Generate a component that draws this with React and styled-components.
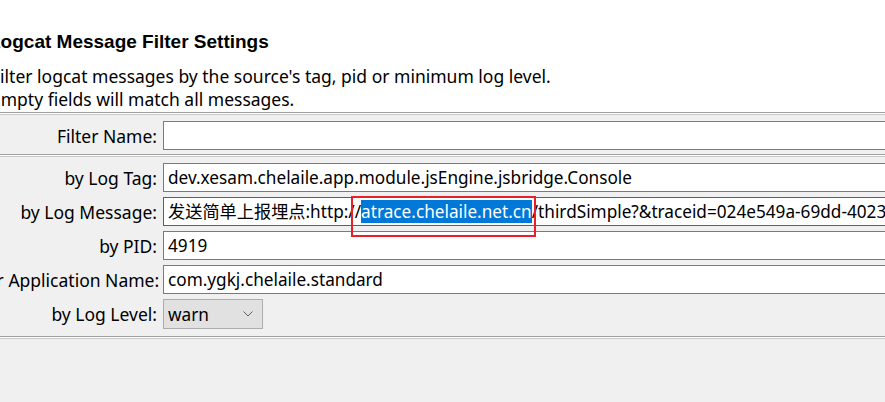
import React from 'react';
import styled, { createGlobalStyle } from 'styled-components';

const GlobalStyle = createGlobalStyle`
  html, body {
    margin: 0;
    padding: 0;
    background: #f0f0f0;
    overflow: hidden;
  }
  body {
    width: 885px;
    height: 402px;
    font-family: 'Noto Sans', 'Noto Sans CJK SC', sans-serif;
    color: #000;
  }
`;

const Page = styled.div`
  margin-left: -20px;
  width: 1000px;
  display: flex;
  flex-direction: column;
`;

const Header = styled.div`
  background: #fff;
  padding: 31px 0 1px 9px;
  display: flex;
  flex-direction: column;
  gap: 12px;
`;

const Title = styled.div`
  font-family: 'Liberation Sans', Arial, sans-serif;
  font-weight: bold;
  font-size: 19px;
  line-height: 22px;
`;

const Description = styled.div`
  font-size: 17.5px;
  line-height: 23px;
  margin-left: 2px;
`;

const Divider = styled.div`
  height: 1px;
  border-top: 1px solid #a0a0a0;
  border-bottom: 1px solid #c8c8c8;
  background: #fff;
`;

const Section = styled.div`
  display: grid;
  grid-template-columns: 177px 1fr;
  column-gap: 6px;
  row-gap: 5px;
  padding: ${p => p.$pad};
`;

const Label = styled.div`
  font-size: 17.5px;
  text-align: right;
  white-space: nowrap;
  align-self: center;
`;

const Field = styled.div`
  position: relative;
  height: 27px;
  width: 760px;
  border: 1px solid ${p => (p.$focused ? '#0078d7' : '#7a7a7a')};
  background: #fff;
  padding-left: 4px;
  font-size: 17.2px;
  line-height: 27px;
  white-space: nowrap;
`;

const Selected = styled.span`
  position: relative;
  background: #0078d7;
  color: #fff;
`;

const Annotation = styled.span`
  position: absolute;
  left: -10px;
  right: -4px;
  top: -4px;
  bottom: -14px;
  border: 2px solid #e8202a;
  z-index: 2;
  pointer-events: none;
`;

const Combo = styled.div`
  box-sizing: border-box;
  width: 100px;
  height: 30px;
  border: 1px solid #adadad;
  background: #e1e1e1;
  display: flex;
  align-items: center;
  justify-content: space-between;
  padding: 0 9px 0 4px;
  font-size: 17.2px;
`;

const Chevron = () => (
  <svg width="10" height="6" viewBox="0 0 10 6">
    <path d="M0.5 0.5 L5 5 L9.5 0.5" fill="none" stroke="#606060" strokeWidth="1" />
  </svg>
);

export default function App() {
  return (
    <>
      <GlobalStyle />
      <Page>
        <Header>
          <Title>Logcat Message Filter Settings</Title>
          <Description>
            Filter logcat messages by the source's tag, pid or minimum log level.
            <br />
            Empty fields will match all messages.
          </Description>
        </Header>
        <Divider />
        <Section $pad="6px 0 4px 0">
          <Label>Filter Name:</Label>
          <Field />
        </Section>
        <Divider />
        <Section $pad="6px 0 7px 0">
          <Label>by Log Tag:</Label>
          <Field>dev.xesam.chelaile.app.module.jsEngine.jsbridge.Console</Field>
          <Label>by Log Message:</Label>
          <Field $focused>
            发送简单上报埋点:http://
            <Selected>
              atrace.chelaile.net.cn
              <Annotation />
            </Selected>
            /thirdSimple?&amp;traceid=024e549a-69dd-4023-9a1b
          </Field>
          <Label>by PID:</Label>
          <Field>4919</Field>
          <Label>for Application Name:</Label>
          <Field>com.ygkj.chelaile.standard</Field>
          <Label>by Log Level:</Label>
          <Combo>
            warn
            <Chevron />
          </Combo>
        </Section>
        <Divider />
      </Page>
    </>
  );
}
